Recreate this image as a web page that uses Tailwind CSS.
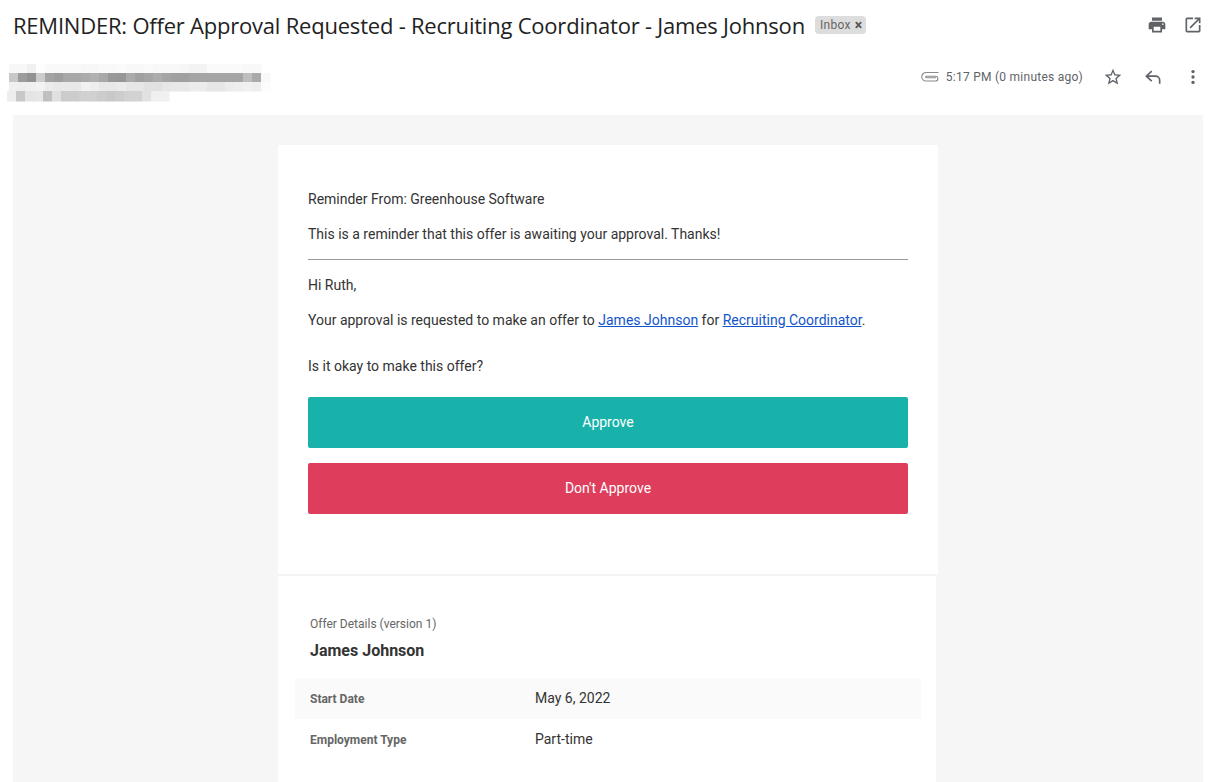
<!DOCTYPE html>
<html lang="en">
<head>
    <meta charset="UTF-8">
    <title>Offer Approval</title>
    <script src="https://cdn.jsdelivr.net/npm/@tailwindcss/browser@4"></script>
</head>
<body class="h-[782px] overflow-hidden bg-white font-['Roboto',sans-serif] text-[#222]">
    <!-- subject row -->
    <div class="flex items-center h-[50px] pl-[13px] pr-[9px]">
        <h1 class="text-[22px] leading-[24px] -mt-[1px] font-['Open_Sans',sans-serif] text-[#222] tracking-[-0.215px] whitespace-nowrap">REMINDER: Offer Approval Requested - Recruiting Coordinator - James Johnson</h1>
        <span class="ml-[10px] flex items-center h-[18px] pl-[5px] pr-[4px] rounded-[4px] bg-[#ddd] text-[12px] text-[#666] tracking-[0.3px]">Inbox <span class="ml-[4px] text-[14px] leading-[14px] font-bold text-[#555]">×</span></span>
        <div class="ml-auto flex items-center gap-[16px]">
            <svg class="w-5 h-5" viewBox="0 0 24 24" fill="#5f6368"><path d="M19 8H5c-1.66 0-3 1.34-3 3v6h4v4h12v-4h4v-6c0-1.66-1.34-3-3-3zm-3 11H8v-5h8v5zm3-7c-.55 0-1-.45-1-1s.45-1 1-1 1 .45 1 1-.45 1-1 1zm-1-9H6v4h12V3z"/></svg>
            <svg class="w-5 h-5" viewBox="0 0 24 24" fill="#5f6368"><path d="M19 19H5V5h7V3H5c-1.1 0-2 .9-2 2v14c0 1.1.9 2 2 2h14c1.1 0 2-.9 2-2v-7h-2v7zM14 3v2h3.59l-9.83 9.83 1.41 1.41L19 6.41V10h2V3h-7z"/></svg>
        </div>
    </div>

    <!-- sender row, blurred in the original -->
    <div class="flex h-[65px] pl-[7px] pr-[9px]">
        <div class="pt-[14px]">
            <svg class="block blur-[0.7px]" width="265" height="40" viewBox="0 0 265 40">
                <g id="pixels"></g>
            </svg>
        </div>
        <div class="ml-auto flex items-center h-[54px]">
            <svg class="w-[18px] h-[18px] mr-[7px] mt-[-1px]" viewBox="0 0 18 18" fill="none" stroke="#8a8a8a" stroke-width="1.1"><path d="M17.500 4.500H5a4.200 4.200 0 0 0 0 8.500H14.500a2.300 2.300 0 0 0 0-4.700H5.500a.7.700 0 0 0 0 1.500H15"/></svg>
            <span class="text-[12px] text-[#5f6368] tracking-[0.25px]">5:17 PM (0 minutes ago)</span>
            <svg class="w-5 h-5 ml-[20px]" viewBox="0 0 24 24" fill="#5f6368"><path d="M22 9.24l-7.19-.62L12 2 9.19 8.63 2 9.24l5.46 4.73L5.82 21 12 17.27 18.18 21l-1.63-7.03L22 9.24zM12 15.4l-3.76 2.27 1-4.28-3.32-2.88 4.38-.38L12 6.1l1.71 4.04 4.38.38-3.32 2.88 1 4.28L12 15.4z"/></svg>
            <svg class="w-5 h-5 ml-[20px]" viewBox="0 0 24 24" fill="none" stroke="#5f6368" stroke-width="2"><path d="M10.500 5L4 11l6.500 6M4.500 11H15a5 5 0 0 1 5 5v4"/></svg>
            <svg class="w-5 h-5 ml-[20px]" viewBox="0 0 24 24" fill="#5f6368"><circle cx="12" cy="5.500" r="2"/><circle cx="12" cy="12" r="2"/><circle cx="12" cy="18.500" r="2"/></svg>
        </div>
    </div>

    <!-- email body -->
    <div class="ml-[13px] mr-[9px] h-[667px] bg-[#f6f6f6] pt-[30px] pl-[265px] overflow-hidden">
        <div class="w-[660px] h-[429px] bg-white px-[30px] pt-[46px] text-[14px] text-[#333]">
            <p class="leading-[16px]">Reminder From: Greenhouse Software</p>
            <p class="leading-[16px] mt-[19px]">This is a reminder that this offer is awaiting your approval. Thanks!</p>
            <hr class="mt-[17px] border-t border-[#999]">
            <p class="leading-[16px] mt-[17px]">Hi Ruth,</p>
            <p class="leading-[16px] mt-[19px]">Your approval is requested to make an offer to <a href="#" class="text-[#15c] underline">James Johnson</a> for <a href="#" class="text-[#15c] underline">Recruiting Coordinator</a>.</p>
            <p class="leading-[16px] mt-[30px]">Is it okay to make this offer?</p>
            <a href="#" class="mt-[23px] flex items-center justify-center h-[51px] rounded-[2px] bg-[#19b2ab] text-white">Approve</a>
            <a href="#" class="mt-[15px] flex items-center justify-center h-[51px] rounded-[2px] bg-[#de3e5c] text-white">Don't Approve</a>
        </div>
        <div class="w-[658px] h-[300px] bg-white border-t-2 border-[#f3f3f3]">
            <p class="ml-[32px] mt-[41px] text-[12px] leading-[14px] text-[#666]">Offer Details (version 1)</p>
            <p class="ml-[32px] mt-[10px] text-[16px] leading-[20px] font-bold text-[#333]">James Johnson</p>
            <div class="mt-[17px] ml-[17px] mr-[15px] flex items-center h-[41px] bg-[#fafafa] text-[14px]">
                <span class="w-[240px] pl-[15px] text-[12px] font-bold text-[#666]">Start Date</span>
                <span class="text-[#333]">May 6, 2022</span>
            </div>
            <div class="ml-[17px] mr-[15px] flex items-center h-[41px] text-[14px]">
                <span class="w-[240px] pl-[15px] text-[12px] font-bold text-[#666]">Employment Type</span>
                <span class="text-[#333]">Part-time</span>
            </div>
        </div>
    </div>

    <script>
        // mosaic cells of the redacted sender, grey level per 9px cell
        const rows = [
            [0, 2, [247,247,240,253,249,249,249,249,247,247,249,249,250,248,248,250,248,248,248,246,243,243,250,250,250,250,248,248]],
            [0, 11, [200,156,146,204,164,158,168,168,171,176,168,152,150,170,160,165,172,165,160,160,165,165,165,165,165,165,190,170,248]],
            [0, 20, [240,238,240,242,235,232,232,232,242,238,232,232,235,230,230,225,225,230,232,232,236,236,230,230,236,238,240,238,252]],
            [0, 29, [238,200,228,230,192,224,204,204,208,208,204,200,204,210,210,225,240,240]]
        ];
        let out = '';
        rows.forEach(([x0, y, cells], r) => {
            cells.forEach((g, i) => {
                const h = r === 3 ? 10 : 9;
                out += `<rect x="${x0 + (r === 3 ? 0 : 2) + i * 9}" y="${y - 2}" width="9.500" height="${h + 0.5}" fill="rgb(${g},${g},${g})"/>`;
            });
        });
        document.getElementById('pixels').innerHTML = out;
    </script>
</body>
</html>
